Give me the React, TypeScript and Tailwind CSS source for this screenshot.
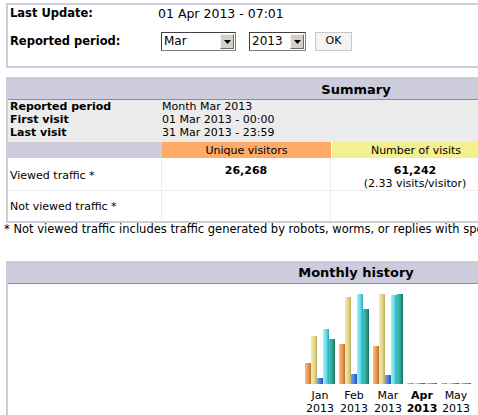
import React from 'react';

const ORANGE = 'bg-[linear-gradient(to_right,#f8c088,#e8984c_55%,#b87030)]';
const YELLOW = 'bg-[linear-gradient(to_right,#f6eeb0,#e4d688_55%,#bcae62)]';
const BLUE = 'bg-[linear-gradient(to_right,#76a4f4,#4477dd_55%,#2a50a8)]';
const CYAN = 'bg-[linear-gradient(to_right,#a4f4fa,#5cdcec_55%,#2ca8b8)]';
const TEAL = 'bg-[linear-gradient(to_right,#44c4ac,#2ea495_55%,#157060)]';

const months: { label: string; bold?: boolean; bars: number[] }[] = [
  { label: 'Jan', bars: [21, 48, 6, 55, 45] },
  { label: 'Feb', bars: [40, 87, 10, 90, 75] },
  { label: 'Mar', bars: [38, 90, 9, 89, 90] },
  { label: 'Apr', bold: true, bars: [1, 1, 1, 1, 1] },
  { label: 'May', bars: [1, 1, 1, 1, 1] },
];

const barColors = [ORANGE, YELLOW, BLUE, CYAN, TEAL];

function FakeSelect({ value, width }: { value: string; width: string }) {
  return (
    <div
      className={`flex h-[19px] ${width} border border-[#7f7f7f] border-l-[#404040] border-t-[#404040] bg-white`}
    >
      <span className="flex-1 pl-[2px] text-[12px] leading-[17px] text-black">{value}</span>
      <span className="m-[1px] flex w-[14px] items-center justify-center border border-[#f4f4f4] border-b-[#6a6a6a] border-r-[#6a6a6a] bg-[#d4d0c8]">
        <svg width="7" height="4" viewBox="0 0 7 4">
          <path d="M0 0h7L3.5 4z" fill="#000" />
        </svg>
      </span>
    </div>
  );
}

export default function App() {
  return (
    <div className="h-[415px] w-[478px] overflow-hidden bg-white font-['DejaVu_Sans',Verdana,sans-serif] text-black">
      <div className="w-[706px] pl-[6px] pt-[3px]">
        {/* top box */}
        <div className="w-[700px] border-2 border-[#ccccdd] pb-[15px]">
          <div className="flex h-[18px] items-center">
            <span className="w-[150px] pl-[2px] text-[11.5px] font-bold">Last Update:</span>
            <span className="text-[12.5px]">01 Apr 2013 - 07:01</span>
          </div>
          <div className="mt-[9px] flex h-[19px] items-center">
            <span className="w-[153px] pl-[2px] text-[11.5px] font-bold">Reported period:</span>
            <FakeSelect value="Mar" width="w-[75px]" />
            <span className="w-[13px]" />
            <FakeSelect value="2013" width="w-[57px]" />
            <span className="w-[9px]" />
            <span className="flex h-[19px] w-[37px] items-center justify-center border border-[#c8c8c8] bg-[#f4f4f4] text-[11px]">
              OK
            </span>
          </div>
        </div>

        {/* summary */}
        <div className="mt-[9px] w-[700px] border-2 border-[#ccccdd] text-[11px] leading-[13px]">
          <div className="flex h-[20px] items-center justify-center bg-[#ccccdd] text-[13px] font-bold">
            Summary
          </div>
          <div className="h-px bg-[#8c8c9c]" />
          <div className="bg-[#ececec] pb-[3px]">
            <div className="flex">
              <span className="w-[154px] pl-[2px] font-bold">Reported period</span>
              <span>Month Mar 2013</span>
            </div>
            <div className="flex">
              <span className="w-[154px] pl-[2px] font-bold">First visit</span>
              <span>01 Mar 2013 - 00:00</span>
            </div>
            <div className="flex">
              <span className="w-[154px] pl-[2px] font-bold">Last visit</span>
              <span>31 Mar 2013 - 23:59</span>
            </div>
          </div>
          <div className="flex h-[16px] items-center">
            <span className="h-full w-[154px] bg-[#ccccdd]" />
            <span className="flex h-full w-[169px] items-center justify-center bg-[#ffaa66]">
              Unique visitors
            </span>
            <span className="ml-px flex h-full w-[168px] items-center justify-center bg-[#f4f090]">
              Number of visits
            </span>
            <span className="ml-px h-full w-[120px] bg-[#4477dd]" />
          </div>
          <div className="flex h-[33px] border-b border-[#ececec]">
            <span className="flex w-[154px] items-center border-r border-[#ececec] pl-[2px] pt-[2px]">
              Viewed traffic *
            </span>
            <span className="w-[169px] border-r border-[#ececec] pt-[6px] text-center font-bold">26,268</span>
            <span className="w-[169px] border-r border-[#ececec] pt-[6px] text-center">
              <b>61,242</b>
              <br />
              (2.33 visits/visitor)
            </span>
          </div>
          <div className="flex h-[30px]">
            <span className="flex w-[154px] items-center border-r border-[#ececec] pl-[2px] pt-[1px]">
              Not viewed traffic *
            </span>
            <span className="w-[169px] border-r border-[#ececec]" />
            <span className="w-[169px] border-r border-[#ececec]" />
          </div>
        </div>
        <div className="-ml-[2px] whitespace-nowrap text-[11.5px] leading-[13px]">
          * Not viewed traffic includes traffic generated by robots, worms, or replies with special HTTP status codes.
        </div>

        {/* monthly history */}
        <div className="mt-[25px] w-[700px] border-2 border-b-0 border-[#ccccdd]">
          <div className="flex h-[20px] items-center justify-center bg-[#ccccdd] text-[13px] font-bold">
            Monthly history
          </div>
          <div className="h-px bg-[#8c8c9c]" />
          <div className="flex pl-[295px] pt-[4px]">
            {months.map((m) => (
              <div key={m.label} className="flex w-[34px] flex-col items-center">
                <div className="flex h-[96px] items-end">
                  {m.bars.map((h, i) => (
                    <div key={i} className={`w-[6px] ${barColors[i]}`} style={{ height: h }} />
                  ))}
                </div>
                <div
                  className={`mt-[5px] text-center text-[11px] leading-[13px] ${m.bold ? 'font-bold' : ''}`}
                >
                  {m.label}
                  <br />
                  2013
                </div>
              </div>
            ))}
          </div>
        </div>
      </div>
    </div>
  );
}
